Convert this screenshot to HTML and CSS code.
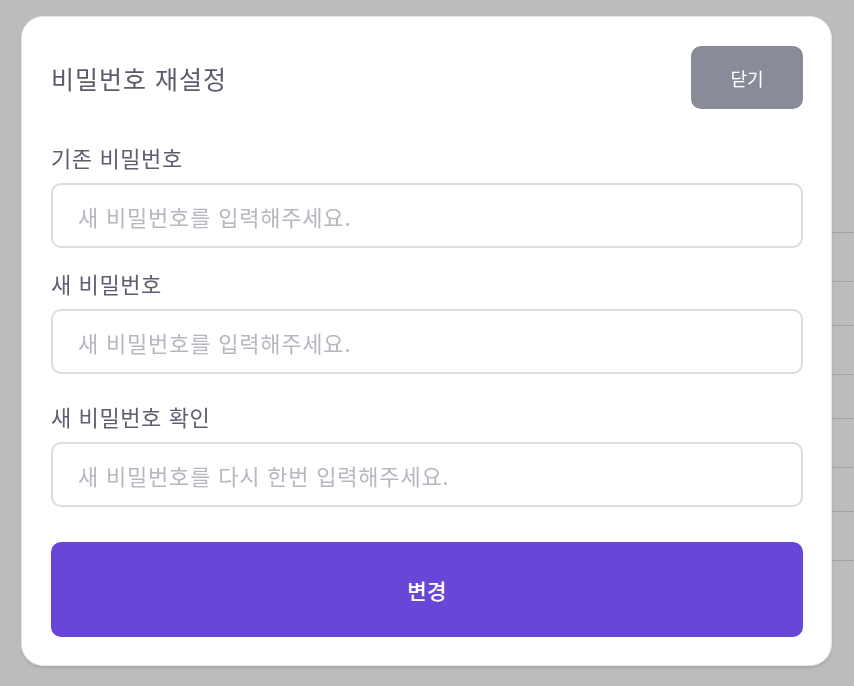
FILE: index.html
```html
<!DOCTYPE html>
<html lang="ko">
<head>
<meta charset="utf-8">
<title>비밀번호 재설정</title>
<link rel="stylesheet" href="styles.css">
</head>
<body>
<div class="backdrop">
  <div class="rows">
    <div class="row r-top"></div>
    <div class="row r-a"></div>
    <div class="row r-b"></div>
    <div class="row r-a"></div>
    <div class="row r-b"></div>
    <div class="row r-a"></div>
    <div class="row r-b"></div>
    <div class="row r-a"></div>
  </div>
</div>
<div class="modal">
  <div class="modal-header">
    <h2 class="modal-title">비밀번호 재설정</h2>
    <button class="btn-close" type="button">닫기</button>
  </div>
  <form class="form">
    <div class="field field-1">
      <label class="field-label">기존 비밀번호</label>
      <input class="field-input" type="password" placeholder="새 비밀번호를 입력해주세요.">
    </div>
    <div class="field field-2">
      <label class="field-label">새 비밀번호</label>
      <input class="field-input" type="password" placeholder="새 비밀번호를 입력해주세요.">
    </div>
    <div class="field field-3">
      <label class="field-label">새 비밀번호 확인</label>
      <input class="field-input" type="password" placeholder="새 비밀번호를 다시 한번 입력해주세요.">
    </div>
    <button class="btn-submit" type="button">변경</button>
  </form>
</div>
</body>
</html>
```
FILE: styles.css
```css
* { box-sizing: border-box; }
html, body {
  margin: 0;
  padding: 0;
  width: 854px;
  height: 686px;
  overflow: hidden;
  background: #bcbcbc;
  font-family: "Noto Sans CJK KR", "Noto Sans", sans-serif;
}
.backdrop {
  width: 854px;
  height: 686px;
  padding-left: 80px;
}
.rows {
  display: flex;
  flex-direction: column;
}
.row {
  border-bottom: 1px solid #a3a3a3;
}
.r-top { height: 233px; }
.r-a { height: 49px; }
.r-b { height: 44px; }

.modal {
  position: fixed;
  left: 21px;
  top: 16px;
  width: 811px;
  height: 650px;
  background: #fff;
  border: 1px solid #e6e6e6;
  border-radius: 22px;
  box-shadow: 0 2px 3px rgba(0,0,0,0.1);
  padding: 29px 28px 29px 29px;
  display: flex;
  flex-direction: column;
}
.modal-header {
  display: flex;
  justify-content: space-between;
  align-items: center;
  height: 63px;
}
.modal-title {
  margin: 0;
  font-size: 25px;
  font-weight: 400;
  color: #5b5c6b;
  letter-spacing: 1px;
}
.btn-close {
  width: 112px;
  height: 63px;
  border: none;
  border-radius: 10px;
  background: #8a8b99;
  color: #fff;
  font-family: inherit;
  font-size: 18px;
  font-weight: 400;
  padding: 0;
}
.form {
  display: flex;
  flex-direction: column;
}
.field {
  display: flex;
  flex-direction: column;
  gap: 12px;
}
.field-1 { margin-top: 34px; }
.field-2 { margin-top: 21px; }
.field-3 { margin-top: 28px; }
.field-label {
  font-size: 22px;
  line-height: 28px;
  color: #5e5f6e;
  letter-spacing: 0.6px;
}
.field-input {
  height: 65px;
  border: 2px solid #dcdce2;
  border-radius: 10px;
  padding: 0 25px;
  font-family: inherit;
  font-size: 22px;
  color: #333;
  outline: none;
}
.field-input::placeholder {
  color: #b7b7c1;
  letter-spacing: 0.8px;
}
.btn-submit {
  margin-top: 35px;
  height: 95px;
  border: none;
  border-radius: 10px;
  background: #6847d8;
  color: #fff;
  font-family: inherit;
  font-size: 21px;
  font-weight: 500;
  letter-spacing: 0.5px;
  padding: 0;
}
```
